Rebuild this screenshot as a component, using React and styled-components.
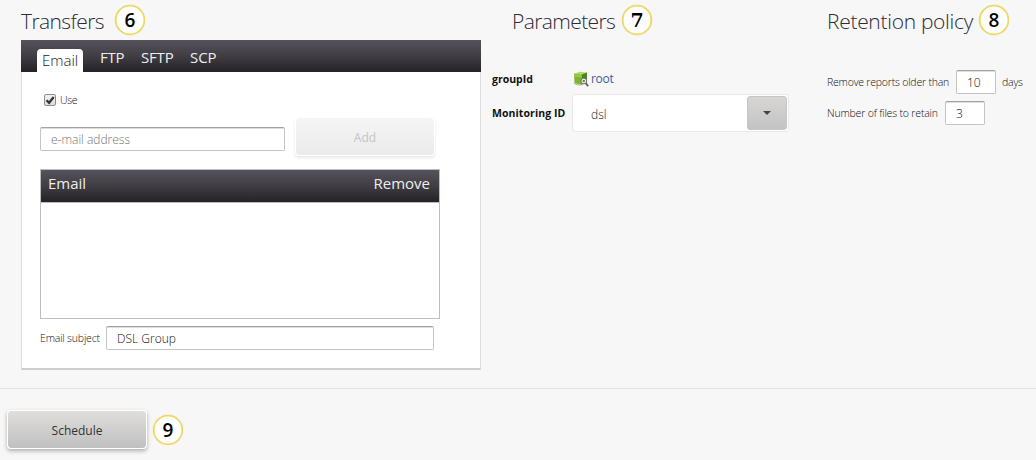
import React from "react";
import styled, { createGlobalStyle } from "styled-components";

const GlobalStyle = createGlobalStyle`
  * { box-sizing: border-box; }
  body {
    margin: 0;
    background: #f7f7f7;
    font-family: "Open Sans", "Noto Sans", sans-serif;
    color: #333;
  }
  input, button { font-family: inherit; margin: 0; }
`;

const Page = styled.div`
  height: 460px;
  overflow: hidden;
  display: flex;
  flex-direction: column;
  background: #f7f7f7;
`;

const Columns = styled.main`
  display: grid;
  grid-template-columns: 460px 297px 1fr;
  column-gap: 11px;
  height: 389px;
  padding-left: 21px;
  border-bottom: 1px solid #e2e2e2;
`;

const Column = styled.section`
  display: flex;
  flex-direction: column;
  padding-left: ${(p) => p.$inset || 0}px;
`;

const HeadingRow = styled.div`
  display: flex;
  align-items: center;
  height: 40px;
  padding-left: ${(p) => p.$inset || 0}px;
`;

const Heading = styled.h2`
  margin: 0;
  width: ${(p) => p.$width}px;
  font-size: 21px;
  font-weight: 300;
  line-height: 40px;
  padding-top: 1px;
  letter-spacing: ${(p) => p.$spacing}px;
  white-space: nowrap;
  color: #2c2c34;
`;

const Badge = styled.span`
  flex: none;
  width: 30px;
  height: 30px;
  border: 1px solid #f3d63a;
  border-radius: 50%;
  background: #fff;
  box-shadow: inset 0 0 0 0.6px #f8e26a, 0 0 1px #c8be80;
  color: #000;
  font: ${(p) => (p.$slab ? '700 19px/28px "DejaVu Serif", serif' : '600 19px/28px "Open Sans", sans-serif')};
  text-align: center;
`;

const darkBar = `linear-gradient(#55525c, #403d43 50%, #242227)`;

const Tabs = styled.nav`
  display: flex;
  align-items: flex-end;
  height: 32px;
  padding-left: 16px;
  background: ${darkBar};
`;

const Tab = styled.a`
  width: ${(p) => p.$width}px;
  height: ${(p) => (p.$active ? 23 : 30)}px;
  margin-right: ${(p) => p.$gap}px;
  padding-left: ${(p) => (p.$active ? 5 : 0)}px;
  border-radius: 4px 4px 0 0;
  background: ${(p) => (p.$active ? "#fff" : "transparent")};
  color: ${(p) => (p.$active ? "#222" : "#eee")};
  font-size: 15px;
  font-weight: ${(p) => (p.$active ? 300 : 400)};
  line-height: ${(p) => (p.$active ? 23 : 31)}px;
  letter-spacing: ${(p) => p.$spacing || 0}px;
  white-space: nowrap;
`;

const Panel = styled.div`
  height: 298px;
  padding: 21px 0 0 18px;
  background: #fff;
  border: 1px solid #ddd;
  border-top: 0;
  border-bottom: 2px solid #cecece;
`;

const CheckRow = styled.label`
  display: flex;
  align-items: center;
  gap: 4px;
  height: 13px;
  padding-left: 4px;
`;

const CheckBox = styled.span`
  display: flex;
  width: 12px;
  height: 12px;
  border: 1px solid #8e8e8e;
  border-radius: 2px;
  background: linear-gradient(#f2f2f2, #dcdcdc);
`;

const Label = styled.span`
  flex: none;
  width: ${(p) => (p.$width ? p.$width + "px" : "auto")};
  color: #111;
  font-size: 10.5px;
  font-weight: ${(p) => p.$weight || 400};
  letter-spacing: ${(p) => p.$spacing || 0}px;
  line-height: 20px;
  white-space: nowrap;
`;

const Row = styled.div`
  display: flex;
  align-items: center;
  height: ${(p) => p.$height}px;
  margin-top: ${(p) => p.$top || 0}px;
`;

const AddRow = styled(Row)`
  align-items: flex-end;
  gap: 10px;
`;

const Input = styled.input`
  width: ${(p) => p.$width}px;
  height: 24px;
  padding: 0 0 0 10px;
  border: 1px solid #c4c4c4;
  border-top-color: #a2a2a2;
  border-radius: 2px;
  outline: 0;
  box-shadow: inset 0 1px 0 #dedede;
  background: #fff;
  color: #111;
  font-size: 12px;
  font-weight: 300;
  &::placeholder { color: #757575; opacity: 1; }
`;

const AddressInput = styled(Input)`
  margin-bottom: 5px;
`;

const Gap = styled.span`
  width: 6px;
`;

const Button = styled.button`
  width: 140px;
  height: 39px;
  padding: 1px 0 0;
  border: 1px solid #fff;
  border-radius: 4px;
  background: linear-gradient(#dfdedc, #c1c0c1);
  background-clip: padding-box;
  box-shadow: 0 2px 4px rgba(0, 0, 0, 0.3);
  color: #333;
  font-size: 12px;
  &:disabled {
    background: linear-gradient(#f5f5f5, #ebebeb);
    background-clip: padding-box;
    box-shadow: 0 2px 3px rgba(0, 0, 0, 0.09);
    color: #c4c4c4;
  }
`;

const Table = styled.div`
  width: 400px;
  height: 150px;
  margin-top: 13px;
  border: 1px solid #bdbdbd;
`;

const TableHead = styled.div`
  display: flex;
  justify-content: space-between;
  height: 33px;
  padding: 0 9px 0 7px;
  border-bottom: 1px solid #bdbdbd;
  background: ${darkBar};
  color: #eee;
  font-size: 15px;
  line-height: 27px;
`;

const Select = styled.div`
  flex: none;
  display: flex;
  justify-content: space-between;
  width: 217px;
  height: 38px;
  padding: 1px 1px 1px 18px;
  border: 1px solid #e9e9e9;
  border-radius: 3px;
  background: #fff;
  color: #222;
  font-size: 12px;
  font-weight: 300;
  line-height: 38px;
`;

const SelectArrow = styled.span`
  display: flex;
  align-items: center;
  justify-content: center;
  width: 40px;
  height: 34px;
  border: 1px solid #c6c6c6;
  border-radius: 3px;
  background: linear-gradient(#d7d6d4, #c4c3c4);
`;

const LinkText = styled.a`
  margin-left: 2px;
  color: #3c6098;
  font-size: 12px;
  letter-spacing: -0.3px;
  line-height: 20px;
`;

const Footer = styled.footer`
  display: flex;
  align-items: center;
  gap: 6px;
  height: 71px;
  padding: 11px 0 0 7px;
`;

const ScheduleButton = styled(Button)`
  margin-bottom: 2px;
  padding-top: 2px;
`;

const CubeIcon = () => (
  <svg width="16" height="16" viewBox="0 0 16 16">
    <path d="M0 12l3 2 7 1-8-3z" fill="#bbb" />
    <path d="M1 2.4L7 .8l7 .8-5.5 2z" fill="#b3dc64" />
    <path d="M1 2.4l7.5 1.2V14L1.5 12z" fill="#7db530" />
    <path d="M8.5 3.6l5.5-2V11l-5.5 3z" fill="#4d861c" />
    <path d="M1.5 3l7 1.2v2L1.5 5.4z" fill="#98cb48" />
    <circle cx="10.8" cy="10" r="2.9" fill="#f2f2f2" stroke="#666" strokeWidth="1" />
    <circle cx="10.8" cy="10" r="1.2" fill="#6a7b5a" />
    <path d="M12.8 12.3l2.3 2.8" stroke="#555" strokeWidth="1.7" />
  </svg>
);

export default function App() {
  return (
    <Page>
      <GlobalStyle />
      <Columns>
        <Column>
          <HeadingRow>
            <Heading $width={94} $spacing={-0.6}>Transfers</Heading>
            <Badge>6</Badge>
          </HeadingRow>
          <Tabs>
            <Tab $active $width={46} $gap={17}>Email</Tab>
            <Tab $width={24} $gap={17} $spacing={-0.2}>FTP</Tab>
            <Tab $width={32} $gap={17} $spacing={-0.2}>SFTP</Tab>
            <Tab $width={27} $spacing={-0.1}>SCP</Tab>
          </Tabs>
          <Panel>
            <CheckRow>
              <CheckBox>
                <svg width="10" height="10" viewBox="0 0 10 10">
                  <path d="M1.5 5.2l2.6 2.6L8.7 2" fill="none" stroke="#333" strokeWidth="2.2" />
                </svg>
              </CheckBox>
              <Label $weight={300} $spacing={-0.3}>Use</Label>
            </CheckRow>
            <AddRow $height={38} $top={12}>
              <AddressInput $width={245} placeholder="e-mail address" />
              <Button disabled>Add</Button>
            </AddRow>
            <Table>
              <TableHead>
                <span>Email</span>
                <span>Remove</span>
              </TableHead>
            </Table>
            <Row $height={24} $top={7}>
              <Label $width={66} $weight={300} $spacing={-0.17}>Email subject</Label>
              <Input $width={328} defaultValue="DSL Group" />
            </Row>
          </Panel>
        </Column>

        <Column>
          <HeadingRow $inset={20}>
            <Heading $width={110} $spacing={-0.6}>Parameters</Heading>
            <Badge $slab>7</Badge>
          </HeadingRow>
          <Row $height={20} $top={29}>
            <Label $width={81} $weight={700}>groupId</Label>
            <CubeIcon />
            <LinkText>root</LinkText>
          </Row>
          <Row $height={38} $top={5}>
            <Label $width={80} $weight={700} $spacing={0.08}>Monitoring ID</Label>
            <Select>
              dsl
              <SelectArrow>
                <svg width="8" height="4" viewBox="0 0 8 4">
                  <path d="M0 0h8L4 4z" fill="#444" />
                </svg>
              </SelectArrow>
            </Select>
          </Row>
        </Column>

        <Column $inset={27}>
          <HeadingRow>
            <Heading $width={152} $spacing={-0.3}>Retention policy</Heading>
            <Badge>8</Badge>
          </HeadingRow>
          <Row $height={24} $top={30}>
            <Label $width={129} $weight={300} $spacing={-0.2}>Remove reports older than</Label>
            <Input $width={40} defaultValue="10" />
            <Gap />
            <Label $weight={300} $spacing={-0.2}>days</Label>
          </Row>
          <Row $height={24} $top={7}>
            <Label $width={118} $weight={300} $spacing={-0.17}>Number of files to retain</Label>
            <Input $width={40} defaultValue="3" />
          </Row>
        </Column>
      </Columns>
      <Footer>
        <ScheduleButton>Schedule</ScheduleButton>
        <Badge>9</Badge>
      </Footer>
    </Page>
  );
}
